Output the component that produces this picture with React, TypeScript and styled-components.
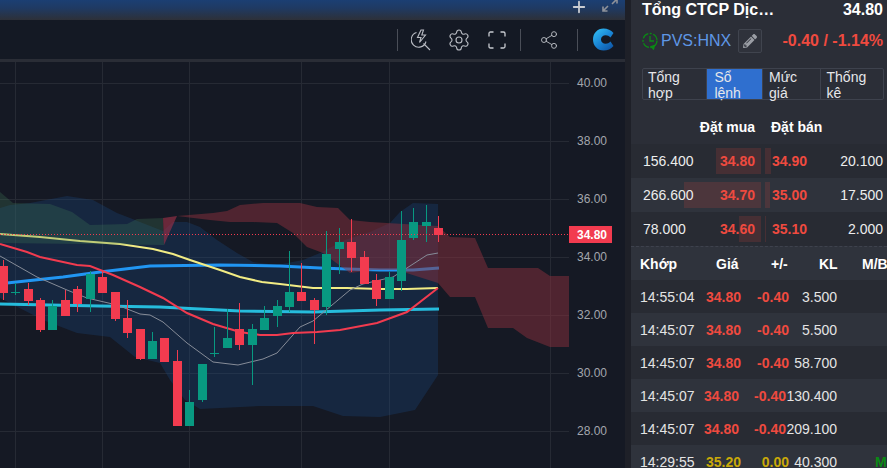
import React from "react";
import styled, { createGlobalStyle } from "styled-components";
import { Settings, Share2, Plus } from "lucide-react";
import { FaPencilAlt } from "react-icons/fa";

const Global = createGlobalStyle`
  html, body { margin: 0; padding: 0; height: 100%; overflow: hidden; background: #1e2028; }
  #root { height: 100%; }
  * { box-sizing: border-box; }
`;

const Page = styled.div`
  display: flex;
  width: 887px;
  height: 468px;
  overflow: hidden;
  background: #1e2028;
  font-family: "Liberation Sans", Arial, sans-serif;
`;
const LeftPanel = styled.div`
  display: flex;
  flex-direction: column;
  width: 625px;
  height: 468px;
`;
const TopBar = styled.div`
  display: flex;
  justify-content: flex-end;
  align-items: flex-start;
  gap: 14px;
  height: 20px;
  padding-right: 7px;
  background: linear-gradient(#1b3f73, #1f3a63 40%, #2d3038);
  color: #c9ccd2;
  overflow: hidden;
`;
const TopIcon = styled.span`
  display: block;
  height: 14px;
  margin-top: -2px;
  & > svg { display: block; }
`;
const Toolbar = styled.div`
  display: flex;
  justify-content: flex-end;
  align-items: center;
  height: 39px;
  padding-right: 11px;
  background: #141924;
  color: #b9bcc3;
`;
const Sep = styled.span<{ $mx: string }>`
  width: 1px;
  height: 22px;
  background: #4a4e58;
  margin: ${(p) => p.$mx};
`;
const ToolIcon = styled.span<{ $w: number; $ml?: number }>`
  display: flex;
  justify-content: center;
  width: ${(p) => p.$w}px;
  margin-left: ${(p) => p.$ml ?? 0}px;
`;
const Rule = styled.div`
  height: 3px;
  background: #2a2d36;
`;
const ChartWrap = styled.div`
  flex: 1;
  background: #151924;
  & > svg { display: block; }
`;

const RightPanel = styled.div`
  width: 256px;
  margin-left: 6px;
  height: 468px;
  overflow: hidden;
  background: #2b2e37;
  color: #fff;
  font-size: 14px;
`;
const Head = styled.div`
  padding: 0 3px 0 11px;
`;
const TitleRow = styled.div`
  display: flex;
  justify-content: space-between;
  align-items: center;
  height: 20px;
  padding-right: 1px;
  font-size: 16px;
  font-weight: 700;
  color: #fff;
`;
const MetaRow = styled.div`
  display: flex;
  align-items: center;
  height: 24px;
  margin-top: 9px;
  padding-right: 1px;
`;
const Symbol = styled.span`
  margin-left: 3px;
  font-size: 16px;
  color: #5f97e6;
`;
const EditBtn = styled.span`
  display: flex;
  align-items: center;
  justify-content: center;
  width: 24px;
  height: 24px;
  margin-left: 7px;
  border: 1px solid #40444e;
  border-radius: 2px;
  color: #9a9da4;
  background: #2f323b;
`;
const Change = styled.span`
  margin-left: auto;
  font-size: 16px;
  font-weight: 700;
  color: #ef4a3f;
`;
const Tabs = styled.div`
  display: flex;
  height: 32px;
  margin-top: 15px;
  border: 1px solid #3e424d;
  border-radius: 2px;
`;
const Tab = styled.div<{ $w: number; $active?: boolean }>`
  width: ${(p) => p.$w}px;
  padding: 0 12px 0 ${(p) => (p.$active ? 7 : 6)}px;
  line-height: 16px;
  color: #e6e7ea;
  background: ${(p) => (p.$active ? "#2f6fcf" : "transparent")};
  border-right: 1px solid #3e424d;
  &:first-child { padding-left: 5px; }
  &:last-child { border-right: 0; }
`;
const BookHead = styled.div`
  display: grid;
  grid-template-columns: 134px 1fr;
  align-items: center;
  height: 34px;
  margin-top: 10px;
  font-weight: 700;
`;
const BookHeadBuy = styled.span`
  text-align: right;
  padding-right: 10px;
`;
const BookHeadSell = styled.span`
  padding-left: 6px;
`;
const BookRow = styled.div<{ $alt?: boolean }>`
  display: grid;
  grid-template-columns: 130px 122px;
  column-gap: 4px;
  align-items: stretch;
  height: 34px;
  padding: 4px 0;
  background: ${(p) => (p.$alt ? "#2f333c" : "#282b33")};
`;
const Side = styled.div<{ $buy?: boolean }>`
  position: relative;
  display: flex;
  justify-content: space-between;
  align-items: center;
  padding: ${(p) => (p.$buy ? "0 6px 0 12px" : "0 4px 0 7px")};
  color: #eceded;
`;
const DepthBar = styled.span<{ $buy?: boolean }>`
  position: absolute;
  top: 0;
  bottom: 0;
  ${(p) => (p.$buy ? "right: 0;" : "left: 0;")}
  background: rgba(239, 74, 63, 0.15);
`;
const Price = styled.span`
  position: relative;
  font-weight: 700;
  color: #ef4a3f;
`;
const Vol = styled.span`
  position: relative;
`;
const TradeHead = styled.div`
  display: grid;
  grid-template-columns: 72px 38px 48px 50px 1fr;
  align-items: center;
  height: 34px;
  padding-left: 9px;
  border-top: 1px dashed #3e424d;
  background: #2f333c;
  font-weight: 700;
`;
const HeadCell = styled.span<{ $ml?: number }>`
  margin-left: ${(p) => p.$ml ?? 0}px;
  white-space: nowrap;
`;
const TradeRow = styled.div<{ $alt?: boolean; $tight?: boolean }>`
  display: grid;
  grid-template-columns: ${(p) => (p.$tight ? "63px 36px 47px 51px 1fr" : "63px 38px 48px 48px 1fr")};
  align-items: center;
  height: 33px;
  padding-left: 9px;
  color: #e4e4e4;
  background: ${(p) => (p.$alt ? "#2f333c" : "#282b33")};
`;
const Cell = styled.span<{ $tone?: "down" | "flat" }>`
  text-align: right;
  white-space: nowrap;
  font-weight: ${(p) => (p.$tone ? 700 : 400)};
  color: ${(p) => (p.$tone === "down" ? "#ef4a3f" : p.$tone === "flat" ? "#c9a909" : "inherit")};
`;
const TimeCell = styled.span`
  white-space: nowrap;
`;
const Side2 = styled.span`
  padding-left: 38px;
  font-weight: 700;
  color: #0a8a14;
`;

const UP = "#089981";
const DOWN = "#f23b4f";
type C = [number, number, number, number, number, number];
// x, wickTop, wickBottom, bodyTop, bodyBottom, up(1)/down(0)
const candles: C[] = [
  [3, 260, 300, 266, 293, 0],
  [15.5, 283, 295, 292, 293, 1],
  [28.5, 283, 305, 289, 301, 0],
  [40.5, 298, 332, 300, 330, 0],
  [52.5, 300, 330, 306, 330, 1],
  [65.5, 290, 316, 300, 316, 0],
  [77.5, 286, 312, 289, 304, 0],
  [90.5, 271, 312, 274, 299, 1],
  [102.5, 270, 293, 277, 293, 0],
  [115.5, 292, 321, 292, 319, 0],
  [127.5, 300, 338, 318, 333, 0],
  [140.5, 329, 360, 329, 359, 0],
  [152.5, 332, 359, 341, 359, 1],
  [164.5, 338, 362, 338, 362, 0],
  [177.5, 350, 426, 361, 426, 0],
  [189.5, 390, 426, 402, 426, 1],
  [202.5, 364, 402, 364, 400, 1],
  [214.5, 327, 357, 353, 354, 1],
  [227.5, 309, 348, 338, 348, 1],
  [239.5, 303, 350, 329, 345, 0],
  [252.5, 324, 385, 329, 345, 1],
  [264.5, 306, 330, 318, 330, 1],
  [277.5, 300, 327, 306, 316, 1],
  [289.5, 251, 312, 292, 307, 1],
  [301.5, 263, 301, 292, 301, 0],
  [314.5, 298, 344, 300, 310, 0],
  [326.5, 231, 315, 254, 307, 1],
  [339.5, 228, 274, 242, 249, 1],
  [351.5, 219, 272, 242, 258, 0],
  [364.5, 251, 284, 257, 284, 0],
  [376.5, 274, 306, 280, 299, 0],
  [389.5, 272, 299, 277, 299, 1],
  [401.5, 211, 291, 240, 281, 1],
  [413.5, 208, 240, 222, 238, 1],
  [426.5, 205, 242, 222, 226, 1],
  [438.5, 216, 242, 228, 235, 0],
];

const yellow = "0,234 40,237 80,241 120,244 153,249 173,254 190,260 220,270 240,277 262,282 280,284 313,288 347,288 380,289 407,289 438,288";
const blue = "-2,284 7,283 63,277 100,272 150,266 220,265 280,266 320,268 347,269 380,270 413,270 439,268";
const cyan = "-2,304 100,306 160,307 240,311 313,312 380,310 439,309";
const redMa = "0,244 27,252 40,257 77,265 90,266 113,275 140,287 163,298 187,313 213,324 240,332 260,335 277,335 293,333 317,332 340,330 377,323 407,312 438,288";
const gray = "0,256 37,277 67,290 87,298 117,305 140,314 150,315 163,322 187,343 213,362 238,365 263,359 277,353 300,327 313,321 350,290 363,284 393,277 427,255 438,253";
const band = "0,208 10,205 30,203 67,196 93,200 117,213 130,218 140,222 163,231 173,222 187,222 200,227 217,240 237,253 253,262 277,265 303,260 320,253 345,240 370,232 390,223 400,212 413,203 438,204 438,375 415,410 380,417 343,416 313,406 260,406 200,409 185,400 170,380 160,363 135,357 110,337 77,333 43,320 0,298";
const kumoGreen = "0,192 13,203 50,204 72,212 90,225 127,224 137,219 163,218 164,245 0,243";
const kumoFlip = "163,218 177,216 164,245";
const kumoRed = "177,216 213,213 227,211 240,205 263,203 300,203 317,207 338,208 350,220 370,222 438,226 450,237 475,238 488,268 538,268 550,276 569,276 569,347 550,347 527,338 513,328 488,328 475,297 450,297 438,283 397,270 373,270 350,273 343,268 323,253 307,247 293,233 277,223 253,222 230,222 210,220";

const hGrid = [83, 141, 199, 257, 315, 373, 431];
const vGrid = [15, 102, 189, 301, 389, 550];
const axis = ["40.00", "38.00", "36.00", "34.00", "32.00", "30.00", "28.00"];

const Chart = () => (
  <svg width={625} height={406} viewBox="0 62 625 406" fontFamily="Liberation Sans, Arial, sans-serif">
    {hGrid.map((y) => (
      <line key={y} x1={0} x2={569} y1={y + 0.5} y2={y + 0.5} stroke="#262a34" />
    ))}
    {vGrid.map((x) => (
      <line key={x} x1={x + 0.5} x2={x + 0.5} y1={62} y2={468} stroke="#262a34" />
    ))}
    <polygon points={band} fill="#1a4a80" fillOpacity={0.3} />
    <polyline points={cyan} fill="none" stroke="#26bcdc" strokeWidth={3} />
    <polyline points={blue} fill="none" stroke="#2196f3" strokeWidth={3} />
    <polyline points={yellow} fill="none" stroke="#f2ec84" strokeWidth={2} />
    <polygon points={kumoGreen} fill="#3f7a55" fillOpacity={0.28} />
    <polygon points={kumoFlip} fill="#a3324a" fillOpacity={0.6} />
    <polygon points={kumoRed} fill="#8a2f3c" fillOpacity={0.5} />
    <polyline points={gray} fill="none" stroke="#868c98" strokeWidth={1} />
    <polyline points={redMa} fill="none" stroke="#f23b4f" strokeWidth={2} />
    {candles.map(([x, wt, wb, bt, bb, up]) => {
      const color = up ? UP : DOWN;
      return (
        <g key={x} fill={color}>
          <rect x={Math.floor(x)} y={wt} width={1} height={wb - wt} />
          <rect x={Math.floor(x) - 4} y={bt} width={9} height={bb - bt} />
        </g>
      );
    })}
    <line x1={0} x2={569} y1={234.5} y2={234.5} stroke="#f23b4f" strokeDasharray="1 2" />
    {axis.map((t, i) => (
      <text key={t} x={577} y={hGrid[i] + 4} fontSize={12} fill="#a3a6ad">
        {t}
      </text>
    ))}
    <rect x={569} y={226} width={43} height={17} fill="#f23b4f" />
    <text x={577} y={239} fontSize={12} fontWeight={700} fill="#fff">
      34.80
    </text>
  </svg>
);

const StrikeIcon = () => (
  <svg width={20} height={22} viewBox="0 0 20 22" fill="none" stroke="#b9bcc3" strokeWidth={1.1}>
    <path d="M5.5 3.5A7.5 7.5 0 1 0 15 12.5" />
    <path d="M12.5 14.5L19 21" />
    <path d="M10 1L6.5 8.5H10L8.5 13.5L14.5 6H10.8L12.5 1Z" />
  </svg>
);
const FullIcon = () => (
  <svg width={18} height={18} viewBox="0 0 18 18" fill="none" stroke="#c8cbd1" strokeWidth={1.3}>
    <path d="M1 5.5V2.5Q1 1 2.5 1H5.5M12.5 1H15.5Q17 1 17 2.5V5.5M17 12.5V15.5Q17 17 15.5 17H12.5M5.5 17H2.5Q1 17 1 15.5V12.5" />
  </svg>
);
const LogoIcon = () => (
  <svg width={21} height={23} viewBox="0 0 21 23" fill="none">
    <defs>
      <linearGradient id="logoG" x1="0" y1="0" x2="0.8" y2="1">
        <stop offset="0" stopColor="#35c4f6" />
        <stop offset="0.55" stopColor="#1a86d6" />
        <stop offset="1" stopColor="#0f58a8" />
      </linearGradient>
    </defs>
    <path d="M10.5 0.5C14.5 0.5 18 2 20.5 5L17.5 9.5C16 8 14.5 7.3 12.8 7.3C9.9 7.3 8 9 8 11.5C8 14 9.9 15.7 12.8 15.7C14.5 15.7 16 15 17.5 13.5L20.5 18C18 21 14.5 22.5 10.5 22.5C4.5 22.5 0 17.8 0 11.5C0 5.2 4.5 0.5 10.5 0.5Z" fill="url(#logoG)" />
  </svg>
);
const ExpandIcon = () => (
  <svg width={16} height={14} viewBox="0 0 16 14" fill="none" stroke="#8f929a" strokeWidth={1.6}>
    <path d="M1 13L6 8M1 8.5V13H5.5M15 1L10 6M15 5.5V1H10.5" />
  </svg>
);
const ClockIcon = () => (
  <svg width={16} height={18} viewBox="0 0 16 18" fill="none" stroke="#0a8a14" strokeWidth={1.3}>
    <circle cx={8} cy={8.5} r={7} strokeDasharray="7 1.5 2 1.5" />
    <path d="M8 4V9H12" />
    <path d="M9 14.5L12.5 13.5L11.5 17Z" fill="#0a8a14" />
  </svg>
);

const book = [
  { bv: "156.400", bp: "34.80", bw: 45, sp: "34.90", sv: "20.100", sw: 6 },
  { bv: "266.600", bp: "34.70", bw: 77, sp: "35.00", sv: "17.500", sw: 5 },
  { bv: "78.000", bp: "34.60", bw: 22, sp: "35.10", sv: "2.000", sw: 1 },
];
const trades = [
  { t: "14:55:04", p: "34.80", c: "-0.40", v: "3.500" },
  { t: "14:45:07", p: "34.80", c: "-0.40", v: "5.500", alt: true },
  { t: "14:45:07", p: "34.80", c: "-0.40", v: "58.700" },
  { t: "14:45:07", p: "34.80", c: "-0.40", v: "130.400", alt: true, tight: true },
  { t: "14:45:07", p: "34.80", c: "-0.40", v: "209.100", tight: true },
  { t: "14:29:55", p: "35.20", c: "0.00", v: "40.300", alt: true, flat: true, s: "M" },
];

export default function App() {
  return (
    <Page>
      <Global />
      <LeftPanel>
        <TopBar>
          <TopIcon>
            <Plus size={18} strokeWidth={2.4} />
          </TopIcon>
          <TopIcon>
            <ExpandIcon />
          </TopIcon>
        </TopBar>
        <Toolbar>
          <Sep $mx="0 13px 0 0" />
          <ToolIcon $w={20}>
            <StrikeIcon />
          </ToolIcon>
          <ToolIcon $w={24} $ml={16}>
            <Settings size={24} strokeWidth={1.1} />
          </ToolIcon>
          <ToolIcon $w={18} $ml={17}>
            <FullIcon />
          </ToolIcon>
          <Sep $mx="0 0 0 14px" />
          <ToolIcon $w={20} $ml={18}>
            <Share2 size={22} strokeWidth={1.1} />
          </ToolIcon>
          <Sep $mx="0 0 0 18px" />
          <ToolIcon $w={21} $ml={15}>
            <LogoIcon />
          </ToolIcon>
        </Toolbar>
        <Rule />
        <ChartWrap>
          <Chart />
        </ChartWrap>
      </LeftPanel>
      <RightPanel>
        <Head>
          <TitleRow>
            <span>Tổng CTCP Dịc…</span>
            <span>34.80</span>
          </TitleRow>
          <MetaRow>
            <ClockIcon />
            <Symbol>PVS:HNX</Symbol>
            <EditBtn>
              <FaPencilAlt size={14} />
            </EditBtn>
            <Change>-0.40 / -1.14%</Change>
          </MetaRow>
          <Tabs>
            <Tab $w={65}>Tổng hợp</Tab>
            <Tab $w={56} $active>
              Sổ lệnh
            </Tab>
            <Tab $w={58}>Mức giá</Tab>
            <Tab $w={63}>Thống kê</Tab>
          </Tabs>
        </Head>
        <BookHead>
          <BookHeadBuy>Đặt mua</BookHeadBuy>
          <BookHeadSell>Đặt bán</BookHeadSell>
        </BookHead>
        {book.map((r, i) => (
          <BookRow key={r.bv} $alt={i === 1}>
            <Side $buy>
              <DepthBar $buy style={{ width: r.bw }} />
              <Vol>{r.bv}</Vol>
              <Price>{r.bp}</Price>
            </Side>
            <Side>
              <DepthBar style={{ width: r.sw }} />
              <Price>{r.sp}</Price>
              <Vol>{r.sv}</Vol>
            </Side>
          </BookRow>
        ))}
        <TradeHead>
          <HeadCell>Khớp</HeadCell>
          <HeadCell $ml={4}>Giá</HeadCell>
          <HeadCell $ml={21}>+/-</HeadCell>
          <HeadCell $ml={21}>KL</HeadCell>
          <HeadCell $ml={14}>M/B</HeadCell>
        </TradeHead>
        {trades.map((r, i) => (
          <TradeRow key={i} $alt={r.alt} $tight={r.tight}>
            <TimeCell>{r.t}</TimeCell>
            <Cell $tone={r.flat ? "flat" : "down"}>{r.p}</Cell>
            <Cell $tone={r.flat ? "flat" : "down"}>{r.c}</Cell>
            <Cell>{r.v}</Cell>
            {r.s ? <Side2>{r.s}</Side2> : <span />}
          </TradeRow>
        ))}
      </RightPanel>
    </Page>
  );
}
